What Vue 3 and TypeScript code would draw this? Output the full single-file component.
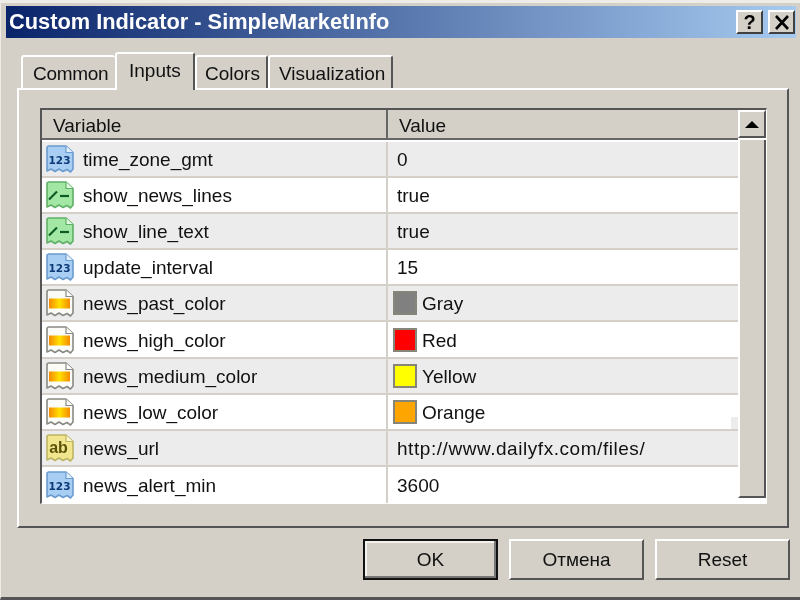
<template>
  <div class="dialog">
    <div class="titlebar">
      <span class="title">Custom Indicator - SimpleMarketInfo</span>
      <div class="title-btns">
        <button class="cap-btn help">?</button>
        <button class="cap-btn">
          <svg width="16" height="15" viewBox="0 0 16 15">
            <path d="M2 1 L14 14 M14 1 L2 14" stroke="#000" stroke-width="2.6" fill="none" />
          </svg>
        </button>
      </div>
    </div>

    <div class="tabs">
      <div v-for="t in tabs" :key="t" class="tab" :class="[t.toLowerCase(), { active: t === 'Inputs' }]">{{ t }}</div>
    </div>

    <div class="panel">
      <div class="grid">
        <div class="grid-main">
          <div class="head">
            <div class="head-cell var">Variable</div>
            <div class="head-cell val">Value</div>
          </div>
          <div class="rows">
            <div v-for="(r, i) in rows" :key="r.name" class="row" :class="{ odd: i % 2 === 0 }">
              <div class="cell name">
                <svg class="icon" width="30" height="30" viewBox="0 0 30 30">
                  <defs>
                    <linearGradient :id="'o' + i" x1="0" x2="1" y1="0" y2="0">
                      <stop offset="0" stop-color="#f58a00" />
                      <stop offset="0.5" stop-color="#ffe000" />
                      <stop offset="1" stop-color="#f58a00" />
                    </linearGradient>
                  </defs>
                  <path :d="pagePath" :fill="kinds[r.kind].fill" :stroke="kinds[r.kind].stroke" stroke-width="1.6" stroke-linejoin="round" />
                  <path d="M21 2 V8.5 H28" :fill="kinds[r.kind].fold" :stroke="kinds[r.kind].stroke" stroke-width="1.2" />
                  <text v-if="r.kind === 'num'" x="14.5" y="19.5" class="num-glyph">123</text>
                  <text v-if="r.kind === 'str'" x="13.5" y="20" class="str-glyph">ab</text>
                  <g v-if="r.kind === 'bool'" stroke="#0d5a24" stroke-width="2.2" fill="none">
                    <path d="M4 19.5 L12 11.5" />
                    <path d="M15 16 H24" />
                  </g>
                  <rect v-if="r.kind === 'color'" x="4" y="10.5" width="21" height="10" :fill="'url(#o' + i + ')'" />
                </svg>
                <span class="txt">{{ r.name }}</span>
              </div>
              <div class="cell value" :class="{ url: r.kind === 'str' }">
                <span v-if="r.swatch" class="swatch" :style="{ background: r.swatch }"></span>
                <span class="txt">{{ r.value }}</span>
              </div>
            </div>
          </div>
        </div>
        <div class="scrollbar">
          <div class="arrow"><span class="tri"></span></div>
          <div class="track"></div>
        </div>
      </div>
    </div>

    <div class="actions">
      <button class="btn default">OK</button>
      <button class="btn">Отмена</button>
      <button class="btn">Reset</button>
    </div>
  </div>
</template>

<script setup lang="ts">
type Kind = 'num' | 'bool' | 'color' | 'str';

interface Row {
  name: string;
  value: string;
  kind: Kind;
  swatch?: string;
}

const tabs = ['Common', 'Inputs', 'Colors', 'Visualization'];

const pagePath = 'M2 4 Q2 2 4 2 H21 L28 8.5 V25 L25.5 28 L22 25.5 L18 27.5 L14 25 L10 27.5 L6 25 L2 27 Z';

const kinds: Record<Kind, { fill: string; stroke: string; fold: string }> = {
  num: { fill: '#a9cef3', stroke: '#6a9bd0', fold: '#e4f0fb' },
  bool: { fill: '#a2e8a4', stroke: '#5fb066', fold: '#e2f8e2' },
  color: { fill: '#fbfbf8', stroke: '#8a8a84', fold: '#ffffff' },
  str: { fill: '#f1e68e', stroke: '#bdb463', fold: '#fbf6cc' },
};

const rows: Row[] = [
  { name: 'time_zone_gmt', value: '0', kind: 'num' },
  { name: 'show_news_lines', value: 'true', kind: 'bool' },
  { name: 'show_line_text', value: 'true', kind: 'bool' },
  { name: 'update_interval', value: '15', kind: 'num' },
  { name: 'news_past_color', value: 'Gray', kind: 'color', swatch: '#808080' },
  { name: 'news_high_color', value: 'Red', kind: 'color', swatch: '#ff0000' },
  { name: 'news_medium_color', value: 'Yellow', kind: 'color', swatch: '#ffff00' },
  { name: 'news_low_color', value: 'Orange', kind: 'color', swatch: '#ffa500' },
  { name: 'news_url', value: 'http://www.dailyfx.com/files/', kind: 'str' },
  { name: 'news_alert_min', value: '3600', kind: 'num' },
];
</script>

<style>
body {
  margin: 0;
  background: #d4d0c8;
}
</style>

<style scoped>
.dialog {
  box-sizing: border-box;
  width: 800px;
  height: 600px;
  overflow: hidden;
  background: #d4d0c8;
  font-family: "Liberation Sans", Arial, sans-serif;
  font-size: 19px;
  color: #111;
  padding: 3px 4px 0 5px;
  border-top: 3px solid #eeece6;
  border-bottom: 3px solid #555;
  border-left: 1px solid #eeece6;
  display: flex;
  flex-direction: column;
  filter: blur(0.35px);
}

.titlebar {
  height: 32px;
  flex: none;
  display: flex;
  align-items: center;
  justify-content: space-between;
  background: linear-gradient(90deg, #0a246a 0%, #a6caf0 100%);
}

.title {
  color: #fff;
  font-weight: 700;
  font-size: 21.8px;
  padding-left: 3px;
}

.title-btns {
  display: flex;
  gap: 5px;
  padding-right: 1px;
}

.cap-btn {
  box-sizing: border-box;
  width: 27px;
  height: 24px;
  padding: 0;
  display: flex;
  align-items: center;
  justify-content: center;
  background: #d4d0c8;
  border: 2px solid;
  border-color: #fff #404040 #404040 #fff;
  font-family: "Liberation Sans", sans-serif;
  font-weight: 700;
  font-size: 20px;
  color: #000;
}

.tabs {
  display: flex;
  align-items: flex-end;
  height: 50px;
  flex: none;
  padding-left: 15px;
}

.tab {
  box-sizing: border-box;
  height: 33px;
  padding: 2px 0 0 10px;
  display: flex;
  align-items: center;
  background: #d4d0c8;
  border-top: 2px solid #fff;
  border-left: 2px solid #fff;
  border-right: 2px solid #555;
  border-radius: 3px 3px 0 0;
}

.tab.common { width: 94px; border-right: 0; letter-spacing: -0.3px; }
.tab.inputs { width: 80px; }
.tab.colors { width: 73px; padding-left: 8px; }
.tab.visualization { width: 125px; padding-left: 9px; }

.tab.active {
  height: 38px;
  margin-bottom: -2px;
  padding-top: 0;
  padding-bottom: 3px;
  padding-left: 12px;
  position: relative;
  z-index: 1;
}

.panel {
  box-sizing: border-box;
  width: 772px;
  height: 440px;
  flex: none;
  margin-left: 11px;
  padding: 18px 20px 22px 21px;
  border-top: 2px solid #fff;
  border-left: 2px solid #fff;
  border-right: 2px solid #555;
  border-bottom: 2px solid #555;
}

.grid {
  box-sizing: border-box;
  height: 396px;
  display: flex;
  border-top: 2px solid #555;
  border-left: 2px solid #555;
  border-bottom: 1px solid #fff;
  border-right: 1px solid #fff;
  background: #fff;
}

.grid-main {
  flex: 1;
  min-width: 0;
  display: flex;
  flex-direction: column;
}

.head {
  display: flex;
  height: 30px;
  flex: none;
  background: #d4d0c8;
  box-shadow: inset 0 -2px 0 #666;
  margin-bottom: 2px;
}

.head-cell {
  padding-left: 11px;
  line-height: 31px;
}

.head-cell.var {
  width: 346px;
  box-sizing: border-box;
  border-right: 2px solid #666;
}

.rows {
  flex: 1;
  display: grid;
  grid-auto-rows: 1fr;
  background: #fff;
}

.row {
  display: flex;
  box-sizing: border-box;
  background: #fff;
  border-bottom: 2px solid #d4d0c8;
}

.row:last-child {
  border-bottom: 0;
}

.row.odd {
  background: #ececec;
}

.row:nth-child(8) {
  position: relative;
}

.row:nth-child(8)::after {
  content: "";
  position: absolute;
  right: 0;
  bottom: 0;
  width: 7px;
  height: 12px;
  background: #ececec;
}

.cell {
  display: flex;
  align-items: center;
  white-space: nowrap;
}

.cell.name {
  box-sizing: border-box;
  width: 346px;
  padding-left: 3px;
  gap: 8px;
  border-right: 2px solid #d4d0c8;
}

.cell.value {
  padding-left: 5px;
  flex: 1;
}

.txt {
  padding-top: 2px;
}

.cell.value .txt:only-child {
  padding-left: 4px;
}

.cell.url {
  letter-spacing: 0.55px;
}

.icon {
  flex: none;
}

.num-glyph {
  font-family: "DejaVu Sans", sans-serif;
  font-weight: 700;
  font-size: 10.5px;
  fill: #0c3a78;
  text-anchor: middle;
}

.str-glyph {
  font-family: "Liberation Sans", sans-serif;
  font-weight: 700;
  font-size: 16px;
  fill: #5a5208;
  text-anchor: middle;
}

.swatch {
  box-sizing: border-box;
  width: 24px;
  height: 24px;
  margin-right: 5px;
  border: 2px solid #85857a;
}

.scrollbar {
  width: 28px;
  flex: none;
  display: flex;
  flex-direction: column;
  background: #fff;
}

.arrow {
  box-sizing: border-box;
  height: 28px;
  flex: none;
  display: flex;
  align-items: center;
  justify-content: center;
  background: #d4d0c8;
  border: 2px solid;
  border-color: #fff #555 #555 #fff;
}

.tri {
  width: 0;
  height: 0;
  border-left: 7px solid transparent;
  border-right: 7px solid transparent;
  border-bottom: 7px solid #000;
}

.track {
  box-sizing: border-box;
  height: 358px;
  margin-top: 2px;
  background: #d4d0c8;
  border-left: 2px solid #fff;
  border-right: 2px solid #555;
  border-bottom: 2px solid #555;
}

.actions {
  display: flex;
  justify-content: flex-end;
  gap: 11px;
  padding: 11px 6px 0 0;
}

.btn {
  box-sizing: border-box;
  width: 135px;
  height: 41px;
  padding: 0;
  background: #d4d0c8;
  border: 2px solid;
  border-color: #fff #555 #555 #fff;
  font-family: inherit;
  font-size: 19px;
  color: #111;
}

.btn.default {
  border-color: #111;
  box-shadow: inset -2px -2px 0 #777, inset 2px 2px 0 #f4f2ec;
}
</style>
